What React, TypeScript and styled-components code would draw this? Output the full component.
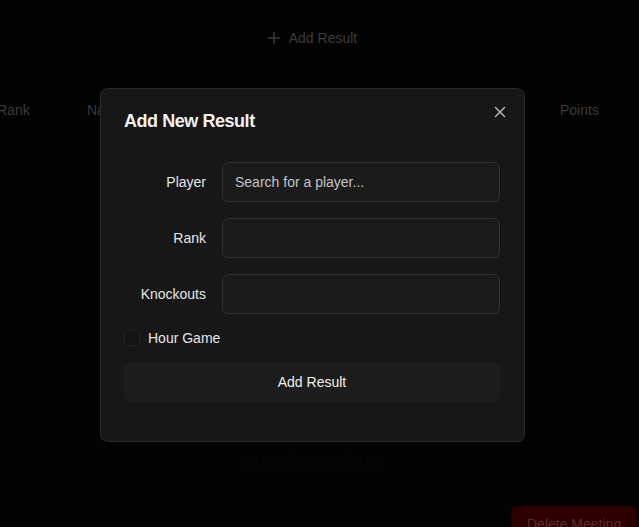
import React from "react";
import styled, { createGlobalStyle } from "styled-components";

const Global = createGlobalStyle`
  html, body { margin: 0; padding: 0; background: #030303; }
  body { font-family: "Liberation Sans", Arial, sans-serif; overflow: hidden; }
  * { box-sizing: border-box; }
`;

const Page = styled.div`
  position: relative;
  width: 639px;
  height: 527px;
  background: #030303;
  overflow: hidden;
`;

const Content = styled.div`
  width: 624px;
  display: flex;
  flex-direction: column;
  align-items: center;
`;

const GhostButton = styled.div`
  margin-top: 28px;
  display: flex;
  align-items: center;
  gap: 8px;
  height: 20px;
  font-size: 14px;
  color: #3c3c3c;
`;

const HeaderRow = styled.div`
  margin-top: 52px;
  width: 624px;
  height: 20px;
  display: flex;
  align-items: center;
  font-size: 14px;
  color: #3a3a3a;
`;

const HeadCell = styled.div<{ $w: number }>`
  width: ${(p) => p.$w}px;
  flex: none;
  white-space: nowrap;
`;

const FaintNote = styled.div`
  margin-top: 333px;
  font-size: 14px;
  color: #070707;
`;

const DangerButton = styled.div`
  position: absolute;
  left: 511px;
  top: 506px;
  width: 126px;
  height: 40px;
  border-radius: 6px;
  background: #2d0000;
  color: #5c2c2c;
  font-size: 14px;
  font-weight: 500;
  padding: 10px 16px;
  white-space: nowrap;
`;

const Dialog = styled.div`
  position: absolute;
  left: 100px;
  top: 88px;
  width: 425px;
  height: 354px;
  background: #171717;
  border: 1px solid #2c2c2c;
  border-radius: 8px;
  padding: 23px 24px 24px 23px;
  display: flex;
  flex-direction: column;
`;

const Title = styled.h2`
  margin: 0;
  font-size: 18px;
  line-height: 18px;
  font-weight: 700;
  letter-spacing: -0.45px;
  color: #f2f2f2;
`;

const Close = styled.button`
  position: absolute;
  right: 17px;
  top: 16px;
  width: 14px;
  height: 14px;
  padding: 0;
  border: none;
  background: transparent;
  color: #b4b4b4;
  display: flex;
  align-items: center;
  justify-content: center;
`;

const Form = styled.div`
  margin-top: 32px;
  display: flex;
  flex-direction: column;
  gap: 16px;
`;

const Row = styled.div`
  display: grid;
  grid-template-columns: repeat(4, 1fr);
  gap: 16px;
  align-items: center;
`;

const Label = styled.label`
  text-align: right;
  font-size: 14px;
  font-weight: 500;
  color: #e6e6e6;
`;

const Input = styled.input`
  grid-column: span 3;
  height: 40px;
  width: 100%;
  border: 1px solid #303030;
  border-radius: 6px;
  background: #1b1b1b;
  padding: 0 12px;
  font-family: "Liberation Sans", Arial, sans-serif;
  font-size: 14px;
  color: #eee;
  outline: none;
  &::placeholder { color: #c4c4c4; }
`;

const CheckRow = styled.div`
  display: flex;
  align-items: center;
  gap: 8px;
  height: 16px;
`;

const Box = styled.span`
  width: 16px;
  height: 16px;
  border: 1px solid #222;
  border-radius: 4px;
  background: #141414;
`;

const CheckLabel = styled.span`
  font-size: 14px;
  font-weight: 500;
  color: #e6e6e6;
`;

const Submit = styled.button`
  height: 40px;
  width: 100%;
  border: none;
  border-radius: 6px;
  background: #1d1d1d;
  color: #f0f0f0;
  font-family: "Liberation Sans", Arial, sans-serif;
  font-size: 14px;
  font-weight: 500;
`;

export default function App() {
  return (
    <>
      <Global />
      <Page>
        <Content>
          <GhostButton>
            <svg width="14" height="14" viewBox="0 0 14 14" fill="none" stroke="#3c3c3c" strokeWidth="1.4">
              <path d="M7 1v12M1 7h12" />
            </svg>
            Add Result
          </GhostButton>
          <HeaderRow>
            <HeadCell $w={90} style={{ marginLeft: -3 }}>Rank</HeadCell>
            <HeadCell $w={250}>Name</HeadCell>
            <HeadCell $w={223}>Knockouts</HeadCell>
            <HeadCell $w={60}>Points</HeadCell>
          </HeaderRow>
          <FaintNote>No results recorded yet</FaintNote>
        </Content>
        <DangerButton>Delete Meeting</DangerButton>
        <Dialog>
          <Title>Add New Result</Title>
          <Close aria-label="Close">
            <svg width="12" height="12" viewBox="0 0 12 12" fill="none" stroke="currentColor" strokeWidth="1.5" strokeLinecap="round">
              <path d="M1.5 1.5l9 9M10.5 1.5l-9 9" />
            </svg>
          </Close>
          <Form>
            <Row>
              <Label>Player</Label>
              <Input placeholder="Search for a player..." />
            </Row>
            <Row>
              <Label>Rank</Label>
              <Input />
            </Row>
            <Row>
              <Label>Knockouts</Label>
              <Input />
            </Row>
            <CheckRow>
              <Box />
              <CheckLabel>Hour Game</CheckLabel>
            </CheckRow>
            <Submit>Add Result</Submit>
          </Form>
        </Dialog>
      </Page>
    </>
  );
}
